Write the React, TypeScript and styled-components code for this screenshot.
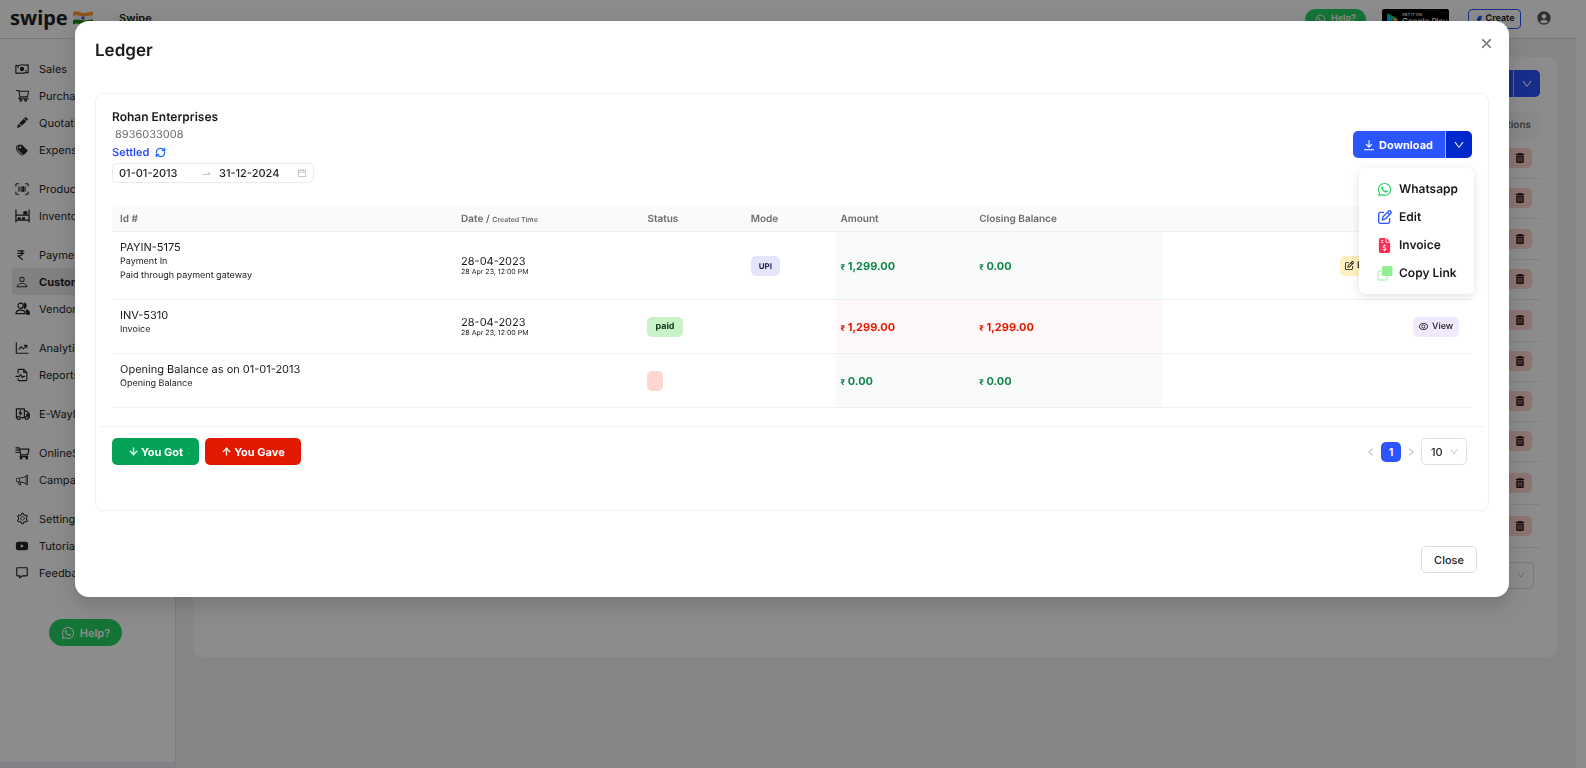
import React from "react";
import styled, { createGlobalStyle, css } from "styled-components";
import {
  AiFillThunderbolt,
  AiFillYoutube,
  AiOutlineArrowDown,
  AiOutlineArrowUp,
  AiOutlineCalendar,
  AiOutlineClose,
  AiOutlineDown,
  AiOutlineEye,
  AiOutlineLeft,
  AiOutlineRight,
  AiOutlineSetting,
  AiOutlineShoppingCart,
  AiOutlineSwapRight,
} from "react-icons/ai";
import { BiMessage } from "react-icons/bi";
import { BsMegaphone, BsPencilFill, BsPerson, BsTagsFill } from "react-icons/bs";
import { FaFileInvoiceDollar, FaRegPenToSquare, FaTrashCan, FaWhatsapp } from "react-icons/fa6";
import { MdAccountCircle } from "react-icons/md";
import { RefreshCw } from "lucide-react";

const GlobalStyle = createGlobalStyle`
  *, *::before, *::after { box-sizing: border-box; }
  body {
    margin: 0;
    background: #fff;
    color: #1a1a1a;
    font-family: Inter, "Liberation Sans", sans-serif;
    font-size: 12px;
    line-height: 16px;
    text-rendering: geometricPrecision;
  }
  button, input, select { font: inherit; color: inherit; margin: 0; text-rendering: inherit; }
  button { cursor: pointer; }
  svg { flex: none; display: block; }
`;

/* ---------- page behind the dialog ---------- */

const Page = styled.div`
  min-height: 100vh;
  display: flex;
  flex-direction: column;
  padding-right: 10px;
`;

const TopBar = styled.header`
  height: 39px;
  display: flex;
  align-items: flex-start;
  padding: 9px 24px 0 10px;
  border-bottom: 1px solid #ddd;
`;

const Logo = styled.a`
  display: flex;
  align-items: center;
  gap: 5px;
  width: 109px;
  color: #222;
  text-decoration: none;
  font: 700 20px/18px "Noto Sans", sans-serif;
`;

const Company = styled.span`
  flex: 1;
  font-weight: 600;
  font-size: 11px;
  line-height: 18px;
`;

const TopActions = styled.div`
  display: flex;
  align-items: flex-start;
`;

const HelpButton = styled.button<{ $large?: boolean }>`
  display: flex;
  align-items: center;
  justify-content: center;
  gap: 5px;
  border: 0;
  border-radius: 14px;
  background: #25d366;
  color: #fff;
  font-weight: 600;
  ${(p) =>
    p.$large
      ? css`
          width: 73px;
          height: 27px;
          margin: 33px 0 0 49px;
          font-size: 11px;
        `
      : css`
          width: 61px;
          height: 20px;
          margin-right: 16px;
          font-size: 9px;
        `}
`;

const PlayBadge = styled.a`
  width: 67px;
  height: 20px;
  display: flex;
  align-items: center;
  gap: 4px;
  padding-left: 5px;
  margin-right: 19px;
  border-radius: 2px;
  background: #000;
  color: #fff;
  text-decoration: none;
`;

const PlayText = styled.span`
  display: flex;
  flex-direction: column;
  font-size: 8px;
  line-height: 9px;
  font-weight: 500;
  white-space: nowrap;
  small {
    font-size: 4px;
    line-height: 5px;
  }
`;

const CreateButton = styled.button`
  width: 53px;
  height: 20px;
  padding: 0;
  display: flex;
  align-items: center;
  justify-content: center;
  gap: 2px;
  margin-right: 15px;
  border: 1px solid #2a55ff;
  border-radius: 4px;
  background: #fff;
  font-size: 9px;
  font-weight: 600;
  svg { color: #2a55ff; }
`;

const AccountButton = styled.button`
  padding: 1px 0 0;
  border: 0;
  background: none;
  color: #55565a;
`;

const Columns = styled.div`
  flex: 1;
  display: flex;
`;

const Sidebar = styled.nav`
  width: 176px;
  flex: none;
  padding-top: 16px;
  border-right: 1px solid #e4e4e4;
  border-bottom: 6px solid #ececf8;
`;

const NavGroup = styled.div`
  margin-bottom: 12px;
`;

const NavItem = styled.a<{ $active?: boolean }>`
  display: flex;
  align-items: center;
  gap: 10px;
  height: 27px;
  margin: 0 12px;
  padding-left: 3px;
  border-radius: 4px;
  color: #262626;
  text-decoration: none;
  font-size: 11px;
  background: ${(p) => (p.$active ? "#ebebeb" : "none")};
  font-weight: ${(p) => (p.$active ? 700 : 400)};
`;

const NavIcon = styled.span`
  width: 14px;
  display: flex;
  justify-content: center;
`;

const Main = styled.main`
  flex: 1;
  padding: 18px 19px 0 18px;
  background: #f5f5f5;
`;

const ListCard = styled.section`
  min-height: 600px;
  padding: 13px 17px;
  border-radius: 8px;
  background: #fff;
`;

const ListToolbar = styled.div`
  display: flex;
  justify-content: flex-end;
  margin-bottom: 14px;
`;

const ListTable = styled.table`
  width: 100%;
  border-collapse: collapse;
  th {
    height: 28px;
    padding: 0 9px;
    text-align: right;
    font-size: 10px;
    font-weight: 600;
    color: #666;
    background: #fafafa;
  }
  td {
    padding: 0 8px;
    border-bottom: 1px solid #ececec;
  }
`;

const DeleteButton = styled.button`
  width: 28px;
  height: 20px;
  display: flex;
  align-items: center;
  justify-content: center;
  margin-left: auto;
  padding: 0 0 0 4px;
  border: 0;
  border-radius: 5px;
  background: #ffd6d2;
  color: #2c1816;
`;

const ListPager = styled.div`
  display: flex;
  justify-content: flex-end;
  padding: 14px 6px 0;
`;

/* ---------- shared controls ---------- */

const SplitButton = styled.div`
  display: flex;
  color: #fff;
`;

const PrimaryButton = styled.button`
  height: 27px;
  display: flex;
  align-items: center;
  gap: 4px;
  padding: 0 12px 0 10px;
  border: 0;
  border-right: 1px solid #a9bbff;
  border-radius: 5px 0 0 5px;
  background: #2a55ff;
  font-size: 11px;
  font-weight: 700;
`;

const CaretButton = styled.button<{ $open?: boolean }>`
  width: 26px;
  height: 27px;
  display: flex;
  align-items: center;
  justify-content: center;
  padding: 0;
  border: 0;
  border-radius: 0 5px 5px 0;
  background: ${(p) => (p.$open ? "#0028cc" : "#2a55ff")};
`;

const SelectBox = styled.label`
  position: relative;
  display: flex;
  align-items: center;
  color: #bbb;
  svg {
    position: absolute;
    right: 8px;
    pointer-events: none;
  }
`;

const Select = styled.select<{ $wide?: boolean }>`
  appearance: none;
  width: ${(p) => (p.$wide ? 88 : 46)}px;
  height: 27px;
  padding: 0 0 0 9px;
  border: 1px solid #dfdfe3;
  border-radius: 5px;
  background: #fff;
  color: #262626;
  font-size: 11px;
  font-weight: 500;
`;

/* ---------- dialog ---------- */

const Overlay = styled.div`
  position: fixed;
  inset: 0;
  padding: 21px 77px 0 75px;
  background: rgba(0, 0, 0, 0.45);
`;

const Dialog = styled.section`
  padding: 20px;
  border-radius: 14px;
  background: #fff;
  box-shadow: 0 6px 16px rgba(0, 0, 0, 0.1), 0 9px 28px 8px rgba(0, 0, 0, 0.07);
`;

const DialogHeader = styled.header`
  display: flex;
  justify-content: space-between;
  height: 52px;
  h2 {
    margin: 0;
    font-size: 17px;
    line-height: 20px;
    font-weight: 600;
  }
`;

const CloseIcon = styled.button`
  width: 14px;
  height: 14px;
  margin: -5px -5px 0 0;
  padding: 0;
  border: 0;
  background: none;
  color: #777;
`;

const LedgerCard = styled.div`
  min-height: 418px;
  padding: 15px 16px 0;
  border: 1px solid #f0f0f0;
  border-radius: 8px;
`;

const PartyRow = styled.div`
  display: flex;
  justify-content: space-between;
  margin-bottom: 23px;
`;

const PartyName = styled.div`
  font-weight: 600;
  line-height: 16px;
`;

const PartyPhone = styled.div`
  padding-left: 3px;
  font-size: 11px;
  line-height: 19px;
  color: #6b6b6b;
`;

const Settled = styled.div`
  display: flex;
  align-items: center;
  gap: 6px;
  font-size: 11px;
  line-height: 16px;
  font-weight: 600;
  color: #2a4dff;
  margin-bottom: 3px;
  svg { color: #276ef1; }
`;

const DateRange = styled.div`
  display: flex;
  align-items: center;
  width: 202px;
  height: 20px;
  padding: 0 6px;
  border: 1px solid #ececec;
  border-radius: 4px;
  color: #b5b5b5;
`;

const DateInput = styled.input<{ $end?: boolean }>`
  width: 82px;
  min-width: 0;
  flex: ${(p) => (p.$end ? "1" : "none")};
  padding: 0 0 0 ${(p) => (p.$end ? 7 : 0)}px;
  border: 0;
  outline: 0;
  background: none;
  color: #262626;
  font-size: 11px;
  line-height: 16px;
  font-weight: 500;
`;

const DownloadArea = styled.div`
  position: relative;
  padding-top: 22px;
`;

const Menu = styled.ul`
  position: absolute;
  top: 59px;
  right: -2px;
  z-index: 1;
  width: 115px;
  margin: 0;
  padding: 7px 0;
  list-style: none;
  border-radius: 6px;
  background: #fff;
  box-shadow: 0 2px 10px rgba(0, 0, 0, 0.12);
`;

const MenuItem = styled.button`
  width: 100%;
  height: 28px;
  display: flex;
  align-items: center;
  gap: 7px;
  padding: 0 0 0 18px;
  border: 0;
  background: none;
  font-weight: 600;
`;

const MenuIcon = styled.span<{ $color: string }>`
  width: 15px;
  display: flex;
  justify-content: center;
  color: ${(p) => p.$color};
`;

const LedgerTable = styled.table`
  width: 100%;
  table-layout: fixed;
  border-collapse: separate;
  border-spacing: 0;
`;

const Th = styled.th`
  height: 26px;
  padding: 0 5px;
  text-align: left;
  font-size: 10px;
  font-weight: 600;
  color: #6b6b6b;
  background: #fafafa;
  border-bottom: 1px solid #f0f0f0;
  &:first-child { padding-left: 8px; border-top-left-radius: 6px; }
  small { font-size: 7px; line-height: 8px; }
`;

type Tone = "in" | "out";
const toneText = { in: "#12854a", out: "#e11900" };
const toneFill = { in: "#f9fbfa", out: "#fff8f8" };

const Td = styled.td<{ $tone?: Tone }>`
  padding: 0 5px;
  border-bottom: 1px solid #f0f0f0;
  background: ${(p) => (p.$tone ? toneFill[p.$tone] : "#fff")};
  color: ${(p) => (p.$tone ? toneText[p.$tone] : "inherit")};
  font-size: 11px;
  font-weight: ${(p) => (p.$tone ? 700 : 400)};
  small { font-size: 8px; line-height: 8px; }
`;

const IdCell = styled(Td)`
  padding: 8px 8px 16px;
  vertical-align: top;
`;

const RecordId = styled.div`
  font-size: 11px;
  line-height: 15px;
`;

const RecordNote = styled.div`
  font-size: 9px;
  line-height: 14px;
`;

const DateText = styled.div`
  font-size: 11px;
  line-height: 12px;
`;

const TimeText = styled.div`
  font-size: 7px;
  line-height: 10px;
`;

const Tag = styled.span<{ $fill: string; $ink?: string; $small?: boolean }>`
  display: block;
  width: fit-content;
  height: 20px;
  padding: 0 8px;
  border-radius: 5px;
  background: ${(p) => p.$fill};
  color: ${(p) => p.$ink || "inherit"};
  font-size: ${(p) => (p.$small ? 8 : 9)}px;
  line-height: 20px;
  font-weight: 700;
`;

const ActionCell = styled(Td)`
  padding: 0 13px;
`;

const RowActions = styled.div`
  display: flex;
  justify-content: flex-end;
  gap: 6px;
`;

const RowButton = styled.button<{ $fill: string; $width: number }>`
  width: ${(p) => p.$width}px;
  height: 20px;
  display: flex;
  align-items: center;
  gap: 3px;
  padding: 0 5px;
  border: 0;
  border-radius: 5px;
  background: ${(p) => p.$fill};
  font-size: 9px;
  font-weight: 500;
`;

const LedgerFooter = styled.div`
  display: flex;
  align-items: center;
  justify-content: space-between;
  margin: 18px -12px 0;
  padding: 11px 17px 0 12px;
  border-top: 1px solid #f0f0f0;
`;

const FooterButtons = styled.div`
  display: flex;
  gap: 6px;
`;

const EntryButton = styled.button<{ $fill: string; $width: number }>`
  width: ${(p) => p.$width}px;
  height: 27px;
  display: flex;
  align-items: center;
  justify-content: center;
  gap: 2px;
  padding: 0;
  border: 0;
  border-radius: 5px;
  background: ${(p) => p.$fill};
  color: #fff;
  font-size: 11px;
  font-weight: 700;
`;

const Pager = styled.div`
  display: flex;
  align-items: center;
`;

const PagerStep = styled.button`
  width: 20px;
  display: flex;
  justify-content: center;
  padding: 0;
  border: 0;
  background: none;
  color: #aaa;
`;

const PageNumber = styled.button`
  width: 20px;
  height: 20px;
  padding: 0;
  border: 0;
  border-radius: 5px;
  background: #2a55ff;
  color: #fff;
  font-size: 11px;
  font-weight: 600;
`;

const DialogFooter = styled.footer`
  display: flex;
  justify-content: flex-end;
  padding: 35px 12px 4px;
`;

const CloseButton = styled.button`
  width: 56px;
  height: 27px;
  padding: 0;
  border: 1px solid #dedede;
  border-radius: 5px;
  background: #fff;
  font-size: 11px;
  font-weight: 500;
`;

/* ---------- drawings ---------- */

const Line = (p: { children: React.ReactNode; size?: number }) => (
  <svg
    width={p.size ?? 14}
    height={p.size ?? 14}
    viewBox="0 0 16 16"
    fill="none"
    stroke="currentColor"
    strokeWidth="1.3"
    strokeLinecap="round"
    strokeLinejoin="round"
    aria-hidden
  >
    {p.children}
  </svg>
);

const CashIcon = () => (
  <Line>
    <path d="M1 3.7c3 1.2 4.500-.5 7-.5s4.500.8 7 .1v9c-3-.8-4.500.5-7 .5s-4.500-.4-7 .2z" />
    <circle cx="8" cy="8" r="1.800" fill="currentColor" />
    <path d="M3.500 5.500v1M12.500 9.500v1" />
  </Line>
);

const ScanIcon = () => (
  <Line>
    <path d="M1 4.500V3a1 1 0 0 1 1-1h2M12 2h2a1 1 0 0 1 1 1v1.500M15 11.500V13a1 1 0 0 1-1 1h-2M4 14H2a1 1 0 0 1-1-1v-1.500" />
    <path d="M4.500 5.500v5M7 5.500v5M11.500 5.500v5" />
    <path d="M9.300 5.500v5" strokeWidth="2" />
  </Line>
);

const ShelfIcon = () => (
  <Line size={15}>
    <path d="M1 2v13M15 2v13M1 7.500h14M1 13h14" />
    <path d="M9.500 4h3v2.500h-3zM3.500 10.500h2V12h-2zM8 10.500h2V12H8z" fill="currentColor" />
  </Line>
);

const RupeeIcon = () => (
  <Line size={12}>
    <path d="M2.500 2.500h8M2.500 5.800h8M2.500 2.500h2.500c4.500 0 4.500 6.500 0 6.500H2.500l6 5" strokeWidth="1.600" />
  </Line>
);

const VendorsIcon = () => (
  <Line size={15}>
    <circle cx="6" cy="5" r="2.800" />
    <path d="M1 13.500c0-5 10-5 10 0z" />
    <path
      d="M10 2.200a3 3 0 0 1 0 5.600zM12 9.500c2.500.5 3.500 2 3.300 4.500h-2.600c0-2-.2-3-.7-4.500z"
      fill="currentColor"
    />
  </Line>
);

const ChartIcon = () => (
  <Line>
    <path d="M1.500 2v12H15M4.500 9.500l2.500-3 2.500 2.500 4-4M10.800 5h2.700v2.700" />
  </Line>
);

const ReportIcon = () => (
  <Line>
    <path d="M3.500 6V2.500a1 1 0 0 1 1-1H10L13.500 5v8.500a1 1 0 0 1-1 1h-8a1 1 0 0 1-1-1V12M10 1.500V5h3.500M1 9.500h4l1.500-2 2 3.500 1.200-1.500H11" />
  </Line>
);

const TruckIcon = () => (
  <Line size={15}>
    <path d="M2 12.500h-.5V3h8.500v9.500H6M10 5.500h2.700l2.500 3v4h-.8M10.200 12.500h.5M6 5 4.500 7.500h2.500L5.500 9.500" />
    <circle cx="4" cy="12.800" r="1.600" />
    <circle cx="12.500" cy="12.800" r="1.600" />
    <path d="M12 8h3v3h-3z" fill="currentColor" stroke="none" />
  </Line>
);

const FastCartIcon = () => (
  <Line size={15}>
    <path d="M1 3h3.500l1.800 7.500h7.200L15 4.500H6M1 5.500h3M1 8h3.500M6.300 10.500 5.500 12.500h8" />
    <circle cx="6.500" cy="14" r=".8" fill="currentColor" />
    <circle cx="12.500" cy="14" r=".8" fill="currentColor" />
  </Line>
);

const DownloadIcon = () => (
  <Line size={12}>
    <path d="M8 2v8.500M4.500 7.300 8 10.800l3.500-3.500M2 14.300h12" strokeWidth="1.500" />
  </Line>
);

const CopyIcon = () => (
  <svg width="16" height="16" viewBox="0 0 16 16" aria-hidden>
    <rect x="1" y="6" width="9" height="9" rx="1.500" fill="#fff" stroke="#bdf2bd" strokeWidth="1.400" />
    <rect x="5" y="1" width="10.500" height="10" rx="1.500" fill="#90ee90" />
  </svg>
);

const FlagIcon = () => (
  <svg width="20" height="16" viewBox="0 0 20 16" aria-hidden>
    <path d="M0 2.500c4-3 7 .8 11 .5 3.500 0 5-1.500 9-1.500v4c-4 0-6 1-9 1-4 0-7-2.500-11 0z" fill="#ff9933" />
    <path d="M0 6.500c4-2.500 7 0 11 0 3 0 5-1 9-1v4c-4 0-6 1-9 1-4 0-7-2-11 0z" fill="#eee" />
    <path d="M0 10.500c4-2 7 0 11 0 3 0 5-1 9-1v4c-4 0-6 1-9 1-4 0-7-2.500-11 0z" fill="#138808" />
    <circle cx="10" cy="8" r="1.800" fill="#5560b8" />
  </svg>
);

const PlayIcon = () => (
  <svg width="11" height="13" viewBox="0 0 11 13" aria-hidden>
    <path d="M0 0v13l6-6.500z" fill="#00c3ff" />
    <path d="M0 0l8.500 4.500L6 6.500z" fill="#00e676" />
    <path d="M0 13l8.500-4.500L6 6.500z" fill="#ff3a44" />
    <path d="M8.500 4.500L11 6.500l-2.500 2L6 6.500z" fill="#ffce00" />
  </svg>
);

/* ---------- content ---------- */

const navGroups: { label: string; icon: React.ReactNode; active?: boolean }[][] = [
  [
    { label: "Sales", icon: <CashIcon /> },
    { label: "Purchases", icon: <AiOutlineShoppingCart size={15} /> },
    { label: "Quotations", icon: <BsPencilFill size={11} /> },
    { label: "Expenses", icon: <BsTagsFill size={12} /> },
  ],
  [
    { label: "Products", icon: <ScanIcon /> },
    { label: "Inventory", icon: <ShelfIcon /> },
  ],
  [
    { label: "Payments", icon: <RupeeIcon /> },
    { label: "Customers", icon: <BsPerson size={14} />, active: true },
    { label: "Vendors", icon: <VendorsIcon /> },
  ],
  [
    { label: "Analytics", icon: <ChartIcon /> },
    { label: "Reports", icon: <ReportIcon /> },
  ],
  [{ label: "E-WayBills", icon: <TruckIcon /> }],
  [
    { label: "OnlineStore", icon: <FastCartIcon /> },
    { label: "Campaigns", icon: <BsMegaphone size={12} /> },
  ],
  [
    { label: "Settings", icon: <AiOutlineSetting size={13} /> },
    { label: "Tutorials", icon: <AiFillYoutube size={14} /> },
    { label: "Feedback", icon: <BiMessage size={14} /> },
  ],
];

const listRowHeights = [39, 40, 41, 40, 42, 40, 40, 40, 43, 43];

interface Entry {
  id: string;
  notes: string[];
  date?: string;
  time?: string;
  status?: React.ReactNode;
  mode?: string;
  tone: Tone;
  amount: string;
  balance: string;
  actions?: React.ReactNode;
}

const entries: Entry[] = [
  {
    id: "PAYIN-5175",
    notes: ["Payment In", "Paid through payment gateway"],
    date: "28-04-2023",
    time: "28 Apr 23, 12:00 PM",
    mode: "UPI",
    tone: "in",
    amount: "1,299.00",
    balance: "0.00",
    actions: (
      <>
        <RowButton $fill="#fff1c2" $width={67}>
          <FaRegPenToSquare size={9} />
          Edit
        </RowButton>
        <RowButton $fill="#f1eaff" $width={46} aria-label="View">
          <AiOutlineEye size={11} />
        </RowButton>
      </>
    ),
  },
  {
    id: "INV-5310",
    notes: ["Invoice"],
    date: "28-04-2023",
    time: "28 Apr 23, 12:00 PM",
    status: <Tag $fill="#c8f3c8" $ink="#14361b">paid</Tag>,
    tone: "out",
    amount: "1,299.00",
    balance: "1,299.00",
    actions: (
      <RowButton $fill="#f1eaff" $width={46}>
        <AiOutlineEye size={11} />
        View
      </RowButton>
    ),
  },
  {
    id: "Opening Balance as on 01-01-2013",
    notes: ["Opening Balance"],
    status: <Tag $fill="#ffd6d2" />,
    tone: "in",
    amount: "0.00",
    balance: "0.00",
  },
];

const menuItems = [
  { label: "Whatsapp", color: "#25d366", icon: <FaWhatsapp size={15} /> },
  { label: "Edit", color: "#2a55ff", icon: <FaRegPenToSquare size={14} /> },
  { label: "Invoice", color: "#ff2d55", icon: <FaFileInvoiceDollar size={15} /> },
  { label: "Copy Link", color: "#90ee90", icon: <CopyIcon /> },
];

export default function App() {
  return (
    <>
      <GlobalStyle />
      <Page>
        <TopBar>
          <Logo href="#">
            swipe
            <FlagIcon />
          </Logo>
          <Company>Swipe</Company>
          <TopActions>
            <HelpButton>
              <FaWhatsapp size={11} />
              Help?
            </HelpButton>
            <PlayBadge href="#">
              <PlayIcon />
              <PlayText>
                <small>GET IT ON</small>
                Google Play
              </PlayText>
            </PlayBadge>
            <CreateButton>
              <AiFillThunderbolt size={9} />
              Create
            </CreateButton>
            <AccountButton aria-label="Account">
              <MdAccountCircle size={16} />
            </AccountButton>
          </TopActions>
        </TopBar>
        <Columns>
          <Sidebar>
            {navGroups.map((group, i) => (
              <NavGroup key={i}>
                {group.map((item) => (
                  <NavItem key={item.label} href="#" $active={item.active}>
                    <NavIcon>{item.icon}</NavIcon>
                    {item.label}
                  </NavItem>
                ))}
              </NavGroup>
            ))}
            <HelpButton $large>
              <FaWhatsapp size={14} />
              Help?
            </HelpButton>
          </Sidebar>
          <Main>
            <ListCard>
              <ListToolbar>
                <SplitButton>
                  <PrimaryButton>New Customer</PrimaryButton>
                  <CaretButton aria-label="More options">
                    <AiOutlineDown size={12} />
                  </CaretButton>
                </SplitButton>
              </ListToolbar>
              <ListTable>
                <thead>
                  <tr>
                    <th>Actions</th>
                  </tr>
                </thead>
                <tbody>
                  {listRowHeights.map((height, i) => (
                    <tr key={i}>
                      <td style={{ height }}>
                        <DeleteButton aria-label="Delete">
                          <FaTrashCan size={10} />
                        </DeleteButton>
                      </td>
                    </tr>
                  ))}
                </tbody>
              </ListTable>
              <ListPager>
                <SelectBox>
                  <Select $wide aria-label="Customers per page">
                    <option>10 / page</option>
                  </Select>
                  <AiOutlineDown size={10} />
                </SelectBox>
              </ListPager>
            </ListCard>
          </Main>
        </Columns>
      </Page>

      <Overlay>
        <Dialog role="dialog" aria-modal="true" aria-labelledby="ledger-title">
          <DialogHeader>
            <h2 id="ledger-title">Ledger</h2>
            <CloseIcon aria-label="Close dialog">
              <AiOutlineClose size={13} strokeWidth={60} />
            </CloseIcon>
          </DialogHeader>
          <LedgerCard>
            <PartyRow>
              <div>
                <PartyName>Rohan Enterprises</PartyName>
                <PartyPhone>8936033008</PartyPhone>
                <Settled>
                  Settled
                  <RefreshCw size={11} strokeWidth={3} />
                </Settled>
                <DateRange>
                  <DateInput aria-label="Start date" defaultValue="01-01-2013" />
                  <AiOutlineSwapRight size={11} />
                  <DateInput $end aria-label="End date" defaultValue="31-12-2024" />
                  <AiOutlineCalendar size={10} />
                </DateRange>
              </div>
              <DownloadArea>
                <SplitButton>
                  <PrimaryButton>
                    <DownloadIcon />
                    Download
                  </PrimaryButton>
                  <CaretButton $open aria-label="Download options" aria-expanded="true">
                    <AiOutlineDown size={12} />
                  </CaretButton>
                </SplitButton>
                <Menu>
                  {menuItems.map((item) => (
                    <li key={item.label}>
                      <MenuItem>
                        <MenuIcon $color={item.color}>{item.icon}</MenuIcon>
                        {item.label}
                      </MenuItem>
                    </li>
                  ))}
                </Menu>
              </DownloadArea>
            </PartyRow>

            <LedgerTable>
              <colgroup>
                <col style={{ width: "25.3%" }} />
                <col style={{ width: "13.7%" }} />
                <col style={{ width: "7.6%" }} />
                <col style={{ width: "6.6%" }} />
                <col style={{ width: "10.2%" }} />
                <col style={{ width: "13.9%" }} />
                <col />
              </colgroup>
              <thead>
                <tr>
                  <Th>Id #</Th>
                  <Th>
                    Date / <small>Created Time</small>
                  </Th>
                  <Th>Status</Th>
                  <Th>Mode</Th>
                  <Th>Amount</Th>
                  <Th>Closing Balance</Th>
                  <Th />
                </tr>
              </thead>
              <tbody>
                {entries.map((e) => (
                  <tr key={e.id}>
                    <IdCell>
                      <RecordId>{e.id}</RecordId>
                      {e.notes.map((note) => (
                        <RecordNote key={note}>{note}</RecordNote>
                      ))}
                    </IdCell>
                    <Td>
                      {e.date && <DateText>{e.date}</DateText>}
                      {e.time && <TimeText>{e.time}</TimeText>}
                    </Td>
                    <Td>{e.status}</Td>
                    <Td>
                      {e.mode && (
                        <Tag $fill="#e4e4fb" $ink="#1d1d4f" $small>
                          {e.mode}
                        </Tag>
                      )}
                    </Td>
                    <Td $tone={e.tone}>
                      <small>₹</small> {e.amount}
                    </Td>
                    <Td $tone={e.tone}>
                      <small>₹</small> {e.balance}
                    </Td>
                    <ActionCell>
                      <RowActions>{e.actions}</RowActions>
                    </ActionCell>
                  </tr>
                ))}
              </tbody>
            </LedgerTable>

            <LedgerFooter>
              <FooterButtons>
                <EntryButton $fill="#05a357" $width={87}>
                  <AiOutlineArrowDown size={11} strokeWidth={40} />
                  You Got
                </EntryButton>
                <EntryButton $fill="#e11900" $width={96}>
                  <AiOutlineArrowUp size={11} strokeWidth={40} />
                  You Gave
                </EntryButton>
              </FooterButtons>
              <Pager>
                <PagerStep aria-label="Previous page">
                  <AiOutlineLeft size={10} />
                </PagerStep>
                <PageNumber>1</PageNumber>
                <PagerStep aria-label="Next page">
                  <AiOutlineRight size={10} />
                </PagerStep>
                <SelectBox>
                  <Select aria-label="Entries per page">
                    <option>10</option>
                  </Select>
                  <AiOutlineDown size={10} />
                </SelectBox>
              </Pager>
            </LedgerFooter>
          </LedgerCard>
          <DialogFooter>
            <CloseButton>Close</CloseButton>
          </DialogFooter>
        </Dialog>
      </Overlay>
    </>
  );
}
